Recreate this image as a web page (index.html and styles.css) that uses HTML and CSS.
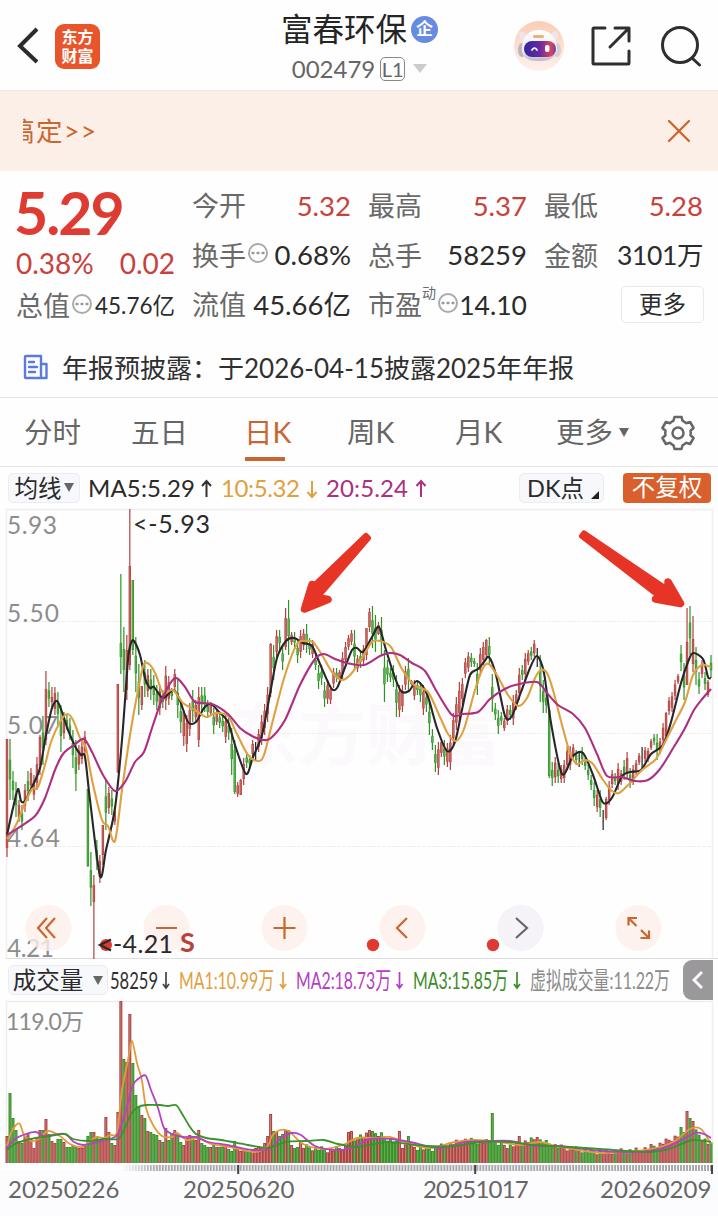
FILE: index.html
```html
<!DOCTYPE html>
<html lang="zh-CN">
<head>
<meta charset="utf-8">
<title>富春环保 002479</title>
<link rel="stylesheet" href="styles.css">
</head>
<body>
<header class="topbar">
  <div class="side side-left">
    <svg class="back" width="26" height="40" viewBox="0 0 26 40"><path d="M22 3 5 20l17 16" fill="none" stroke="#2b2b2b" stroke-width="4"/></svg>
    <div class="brand"><span>东方</span><span>财富</span></div>
  </div>
  <div class="title">
    <div class="name">富春环保<span class="badge">企</span></div>
    <div class="code"><span>002479</span><span class="level">L1</span><i class="caret"></i></div>
  </div>
  <div class="side side-right">
    <svg width="52" height="52" viewBox="0 0 52 52">
      <defs>
        <linearGradient id="halo" x1="0" y1="0" x2="0" y2="1"><stop offset="0" stop-color="#fbcdb4"/><stop offset="1" stop-color="#fdf1ee"/></linearGradient>
        <linearGradient id="visor"><stop offset="0" stop-color="#32269a"/><stop offset=".5" stop-color="#6a2aa2"/><stop offset=".85" stop-color="#d8455f"/><stop offset="1" stop-color="#6b3bb0"/></linearGradient>
        <linearGradient id="shell" x1="0" y1="0" x2="0" y2="1"><stop offset="0" stop-color="#fff"/><stop offset=".7" stop-color="#eeeaf0"/><stop offset="1" stop-color="#bdb6c4"/></linearGradient>
      </defs>
      <circle cx="26" cy="26" r="25" fill="url(#halo)"/>
      <path d="M6 12q5-1 9 5l-5 6q-4-6-4-11zM44 11q-5 0-8 5l7 6q3-6 1-11z" fill="#eee5ea"/>
      <ellipse cx="9" cy="30" rx="4" ry="7" fill="#bcb4c1"/><ellipse cx="44" cy="30" rx="4" ry="7" fill="#d9cdd6"/>
      <path d="M9 27Q11 10 26 10t18 17q1 14-18 14T9 27z" fill="url(#shell)"/>
      <rect x="20" y="15" width="11" height="3" rx="1.5" fill="#e9b378"/>
      <rect x="11" y="21" width="32" height="16" rx="8" fill="url(#visor)"/>
      <path d="M19 30q2.500-4 5 0" fill="none" stroke="#fff" stroke-width="1.700" stroke-linecap="round"/>
      <rect x="32" y="25" width="4.500" height="7" rx="2" fill="#fff"/>
    </svg>
    <svg class="share" width="42" height="42" viewBox="0 0 42 42" fill="none" stroke="#2f2f31" stroke-width="3" stroke-linecap="round" stroke-linejoin="round"><path d="M15 3H4Q3 3 3 4v34q0 1 1 1h34q1 0 1-1V26M25 3h14v13M39 3 20 22"/></svg>
    <svg width="42" height="42" viewBox="0 0 42 42" fill="none" stroke="#2f2f31" stroke-width="3" stroke-linecap="round"><circle cx="20" cy="20" r="17.500"/><path d="m32 33 7.500 7"/></svg>
  </div>
</header>

<section class="banner">
  <div class="marquee"><span>搞定&gt;&gt;</span></div>
  <svg width="24" height="24" viewBox="0 0 24 24"><path d="m2 2 20 20M22 2 2 22" stroke="#cb6630" stroke-width="2.300" stroke-linecap="round"/></svg>
</section>

<section class="quote">
  <div class="col">
    <div class="price">5.29</div>
    <div class="cell change"><b>0.38%</b><b>0.02</b></div>
    <div class="cell small"><span>总值<i class="dots"></i></span><em>45.76亿</em></div>
  </div>
  <div class="col">
    <div class="cell"><span>今开</span><em class="up">5.32</em></div>
    <div class="cell"><span>换手<i class="dots"></i></span><em>0.68%</em></div>
    <div class="cell"><span>流值</span><em>45.66亿</em></div>
  </div>
  <div class="col">
    <div class="cell"><span>最高</span><em class="up">5.37</em></div>
    <div class="cell"><span>总手</span><em>58259</em></div>
    <div class="cell pe"><span>市盈<sup>动</sup><i class="dots"></i></span><em>14.10</em></div>
  </div>
  <div class="col">
    <div class="cell"><span>最低</span><em class="up">5.28</em></div>
    <div class="cell amount"><span>金额</span><em>3101万</em></div>
    <div class="cell end"><button class="more">更多</button></div>
  </div>
</section>

<section class="notice">
  <svg width="26" height="26" viewBox="0 0 26 26" fill="none" stroke="#5b7bdc" stroke-width="2.400" stroke-linejoin="round"><path d="M3 2h15v22H3q-1 0-1-1V3q0-1 1-1zM18 10h5.500v14H18"/><path d="M6 8h5M6 13h8M6 18h6" stroke-linecap="round"/></svg>
  <span>年报预披露：于2026-04-15披露2025年年报</span>
</section>

<nav class="tabs">
  <span>分时</span><span>五日</span><span class="active">日K</span><span>周K</span><span>月K</span><span class="drop">更多<i></i></span>
  <svg width="36" height="36" viewBox="-18 -18 36 36" fill="none" stroke="#666" stroke-width="2.500" stroke-linejoin="round"><path d="M-3.500-16H3.500L4.500-12.300Q6.300-11.400 8-9.800L12.100-11 15.600-5 12.500-2.200Q13 0 12.500 2.200L15.600 5 12.100 11 8 9.800Q6.300 11.400 4.500 12.300L3.500 16H-3.500L-4.500 12.300Q-6.300 11.400-8 9.800L-12.100 11-15.600 5-12.500 2.200Q-13 0-12.500-2.200L-15.600-5-12.100-11-8-9.800Q-6.300-11.400-4.500-12.300Z"/><circle r="5.500"/></svg>
</nav>

<section class="ma">
  <div class="chip avg">均线<i></i></div>
  <svg class="matext" width="344" height="40" viewBox="85 467 344 40">
    <text x="88" y="496" textLength="107" fill="#2a2a2a">MA5:5.29</text>
    <text x="221" y="496" textLength="79" fill="#dfa03f">10:5.32</text>
    <text x="326" y="496" textLength="82" fill="#ac2f80">20:5.24</text>
    <g fill="none" stroke-width="2"><path d="M206.500 496v-16m-4.500 5 4.500-5 4.500 5" stroke="#333"/><path d="M312 480v16m-4.500-5 4.500 5 4.500-5" stroke="#dfa03f"/><path d="M421 496v-16m-4.500 5 4.500-5 4.500 5" stroke="#ac2f80"/></g>
  </svg>
  <div class="chip dk">DK点<i></i></div>
  <div class="fq">不复权</div>
</section>

<section class="stage">
  <svg id="kline" width="718" height="452" viewBox="0 508 718 452">
    <text class="watermark" x="230" y="760">东方财富</text>
    <g fill="none" stroke="#efefef"><path d="M6.500 958V509.500H712.500V958" stroke-width="1.500"/><path d="M7 621.500H712M7 733.500H712M7 846.500H712" stroke-dasharray="4 1"/><path d="M6 958.500H718" stroke="#ddd"/></g>
    <g class="axis"><text x="7" y="534" textLength="50">5.93</text><text x="7" y="622" textLength="52">5.50</text><text x="7" y="734" textLength="51">5.07</text><text x="7" y="847" textLength="53">4.64</text><text x="7" y="957" textLength="47">4.21</text></g>
    <g id="candles"></g>
    <g id="averages" fill="none" stroke-width="2.100" stroke-linejoin="round"></g>
    <g class="pad">
      <circle cx="48.500" cy="928" r="23"/><circle cx="166.500" cy="928" r="23"/><circle cx="284.500" cy="928" r="23"/><circle cx="402.500" cy="928" r="23"/><circle cx="520.500" cy="928" r="23" class="off"/><circle cx="638.500" cy="928" r="23"/>
      <path d="m47 918-9 10 9 10m8-20-9 10 9 10M156 928h21M273.500 928h22m-11-11v22M407 918l-10 10 10 10"/><path d="m516 918 11 10-11 10" style="stroke:#666"/>
      <path d="M628.500 925.500V918H637m-8 .5 7.500 7.500M649 930.500v7.500h-8.500m8-.5-7.500-7.500"/>
    </g>
    <g fill="#df3a31"><circle cx="106" cy="945" r="6"/><circle cx="373" cy="945" r="6.200"/><circle cx="493" cy="945" r="6.200"/></g>
    <g class="tag"><text x="133" y="533" textLength="77">&lt;-5.93</text><path d="m111 939.500-11 5.500 11 5.500" fill="none" stroke="#2a2a2a" stroke-width="2.200"/><text x="113" y="953" textLength="60">-4.21</text><text x="180" y="952" class="sell">S</text></g>
    <g fill="#e63426" stroke="#e63426" stroke-linejoin="round">
      <path d="M366 536 368 538 319 595 311 589Z" stroke-width="6"/><path d="M312 584.500 304.500 609 328 599.500 314 597Z" stroke-width="7.500"/>
      <path d="M582 536 584 533.500 669 591 663 599Z" stroke-width="6"/><path d="M668 582 680.500 603.500 655.500 599 668 594Z" stroke-width="7.500"/>
    </g>
  </svg>
</section>

<section class="volbar">
  <div class="chip vol">成交量<i></i></div>
  <svg width="565" height="40" viewBox="108 960 565 40">
    <g class="squeeze">
    <text x="110" y="989" textLength="48" lengthAdjust="spacingAndGlyphs" fill="#2f2f2f">58259</text>
    <text x="179" y="989" textLength="95" lengthAdjust="spacingAndGlyphs" fill="#dfa03f">MA1:10.99万</text>
    <text x="296" y="989" textLength="95" lengthAdjust="spacingAndGlyphs" fill="#b440c0">MA2:18.73万</text>
    <text x="413" y="989" textLength="95" lengthAdjust="spacingAndGlyphs" fill="#3b8c26">MA3:15.85万</text>
    <text x="530" y="989" textLength="140" lengthAdjust="spacingAndGlyphs" fill="#8b8b8b">虚拟成交量:11.22万</text>
    </g>
    <g fill="none" stroke-width="1.700"><path d="M166 972v16m-3-4 3 4 3-4" stroke="#444"/><path d="M283 972v16m-3-4 3 4 3-4" stroke="#dfa03f"/><path d="M399.500 972v16m-3-4 3 4 3-4" stroke="#b440c0"/><path d="M517 972v16m-3-4 3 4 3-4" stroke="#3b8c26"/></g>
  </svg>
  <div class="handle"><svg width="14" height="20" viewBox="0 0 14 20"><path d="m11 2-8 8 8 8" fill="none" stroke="#fff" stroke-width="2.800"/></svg></div>
</section>

<section class="volume">
  <svg width="718" height="176" viewBox="0 1000 718 176">
    <path d="M6.500 1163V1001.500H712.500V1163" fill="none" stroke="#eee" stroke-width="1.500"/>
    <g id="bars"></g>
    <g id="volAverages" fill="none" stroke-width="1.800" stroke-linejoin="round"></g>
    <g id="ticks"></g>
    <text x="6" y="1030" textLength="78" class="volmax">119.0万</text>
  </svg>
</section>
<footer class="dates"><span>20250226</span><span>20250620</span><span class="narrow">20251017</span><span>20260209</span></footer>
<script src="chart.js"></script>
</body>
</html>
```
FILE: styles.css
```css
* { box-sizing: border-box; }
body { margin: 0; width: 718px; height: 1216px; overflow: hidden; background: #fefefe; color: #2b2b2b; font-family: Lato, "Noto Sans CJK SC", sans-serif; }
svg { display: block; flex: none; }
i, em { font-style: normal; }
.topbar { height: 91px; border-bottom: 1px solid #e9e9e9; display: flex; justify-content: space-between; padding: 0 17px 0 15px; }
.side { display: flex; align-items: center; width: 190px; }
.side-left { gap: 14px; padding-top: 2px; }
.side-right { padding: 2px 0 0 2px; }
.side-right .share { margin: 0 28px 0 25px; }
.brand { width: 45px; height: 45px; border-radius: 9px; background: #e9552a; color: #fff; font: 700 16px/19px "Noto Sans CJK SC", sans-serif; text-align: center; display: flex; flex-direction: column; justify-content: center; }
.title { display: flex; flex-direction: column; align-items: center; padding: 8px 0 0 3px; }
.name { display: flex; align-items: center; gap: 4px; font-size: 31.500px; line-height: 42px; color: #242424; }
.badge { width: 27px; height: 27px; border-radius: 50%; background: #668ce1; color: #fff; font-size: 17px; line-height: 26px; text-align: center; font-weight: 700; }
.code { display: flex; align-items: center; gap: 5px; font-size: 24px; line-height: 37px; color: #666; }
.level { border: 1px solid #888; border-radius: 5px; font-size: 20px; line-height: 22px; width: 25px; text-align: center; }
.caret { border: 7px solid transparent; border-top: 9px solid #ccc; border-bottom: 0; margin-left: 3px; }
.banner { height: 80px; background: #fcefe8; display: flex; align-items: center; justify-content: space-between; padding: 0 27px 0 23px; }
.marquee { overflow: hidden; width: 120px; height: 44px; display: flex; color: #cb6630; font-size: 26.500px; line-height: 45px; white-space: nowrap; }
.marquee span { margin-left: -15px; letter-spacing: 1.500px; }
.quote { height: 167px; display: grid; grid-template-columns: repeat(4, 158px); gap: 18px; padding: 10px 0 0 17px; }
.cell { height: 49.500px; display: flex; align-items: center; justify-content: space-between; font-size: 27px; line-height: 40px; white-space: nowrap; }
.cell span { color: #696969; display: flex; align-items: center; margin-left: -1px; padding-top: 1px; }
.cell em { font-size: 27.500px; }
.cell .up, .change { color: #c8413a; }
.cell.change b { font-weight: 400; font-size: 28px; margin-left: -1px; }
.cell.change { height: 37px; }
.price { height: 63px; color: #de3c32; font-size: 59px; font-weight: 700; line-height: 64px; letter-spacing: -2px; margin-left: -3px; }
.cell.small em { font-size: 22.500px; }
.pe em { font-size: 26.500px; }
.amount em { font-size: 26.500px; letter-spacing: -.4px; }
.dots { width: 20px; height: 20px; margin: -5px 0 0 2px; border: 2px solid #aaa; border-radius: 50%; background: radial-gradient(circle, #999 1.300px, transparent 1.700px) 0 0 / 5px 16px; background-position: .5px 0; }
.cell sup { font-size: 14px; line-height: 16px; align-self: flex-start; }
.cell.end { justify-content: flex-end; }
.more { width: 83px; height: 37px; margin-right: -1px; border: 1px solid #e8e8e8; border-radius: 5px; background: #fff; color: #2b2b2b; font: 23.500px/30px "Noto Sans CJK SC", sans-serif; padding: 0 0 3px; }
.notice { height: 60px; border-bottom: 1px solid #e7e7e7; display: flex; align-items: center; gap: 13px; padding: 0 0 2px 23px; font-size: 26px; color: #303030; white-space: nowrap; }
.tabs { height: 69px; border-bottom: 1px solid #e5e5e5; display: grid; grid-template-columns: 107px 113px 103px 108px 101px 104px 36px; align-items: center; padding-left: 24px; font-size: 28.500px; line-height: 69px; color: #666; }
.tabs span { justify-self: start; }
.active { color: #c96530; background: linear-gradient(#c96530, #c96530) 1px 59px / 40px 4px no-repeat; }
.tabs .drop { display: flex; align-items: center; gap: 6px; }
.drop i, .avg i, .vol i { border: 5px solid transparent; border-top: 9px solid #666; border-bottom: 0; }
.ma, .volbar { height: 41px; display: flex; align-items: center; padding-left: 8px; }
.chip { height: 30px; border: 1px solid #ececf2; border-radius: 5px; background: #f7f8fc; display: flex; align-items: center; justify-content: center; font-size: 24px; line-height: 26px; white-space: nowrap; }
.avg { width: 72px; gap: 2px; font-size: 23.500px; }
.matext { margin-left: 5px; font-size: 24px; }
.dk { width: 85px; gap: 7px; margin-left: 90px; padding-left: 3px; font-size: 23.500px; }
.dk i { align-self: flex-end; margin-bottom: 3px; border-left: 8px solid transparent; border-bottom: 8px solid #222; }
.fq { width: 88px; height: 30px; margin-left: 19px; border-radius: 4px; background: #d9602c; color: #fff; font-size: 23.500px; line-height: 29px; text-align: center; }
.axis { fill: #8d8d8d; font-size: 24.500px; }
.watermark { font-size: 68px; font-weight: 700; fill: #fcf9fc; }
.pad circle { fill: #fdefea; fill-opacity: .8; }
.pad .off { fill: #f2eff6; }
.pad path { fill: none; stroke: #cb6630; stroke-width: 2.200; }
.tag { font-size: 25px; fill: #2a2a2a; }
.tag .sell { font-size: 27px; font-weight: 700; fill: #b8413a; }
.stage { height: 452px; }
.volbar { height: 40px; }
.vol { width: 100px; gap: 10px; font-size: 23.500px; }
.squeeze { font-size: 24px; }
.handle { width: 30px; height: 40px; margin-left: auto; margin-right: 5px; background: #9b989c; border-radius: 9px 0 0 9px; display: flex; align-items: center; justify-content: center; }
.volmax { fill: #8b8b8b; font-size: 23px; }
.volume { height: 170px; }
.dates { display: grid; grid-template-columns: 175px 240px 177px 112px; padding: 4px 0 0 8px; font-size: 24px; line-height: 30px; color: #666; background: #fcfbfe; height: 46px; }
.narrow { letter-spacing: -.8px; }
```
FILE: chart.js
```js
// One candle per 3px: colour, high, low and, when known, body top and bottom.
const candleData = `r739,857,739,848 g739,800 g771,800 g782,817 r800,822 g805,830 r784,812 g771,801 r768,790 r775,800 r757,790 r735,775,737,765
g716,765 r671,745,689,740 g682,707 r687,708,697,702 r687,715 g692,725 g705,752 r712,739 g715,730 g718,740 g730,768 g740,791
r745,770 r742,764 r731,757 g789,867,789,866 g852,906 r875,959,885,902 g840,870 r855,883 r825,865,825,855 g779,830 r787,814 g790,815 r808,825 r684,773,684,772
g574,674,643,657 g627,692 r635,700,650,690 r509,670,566,665 g580,655,580,650 g637,692 g664,715 r686,710,686,705 g660,697 r669,697 g669,700 g675,705 g685,710
r685,715 g690,708 r666,710 r676,705 g688,700 r669,692 g680,718 g700,733 r710,746,712,736 r715,752 r703,736 g690,722 r700,722 r687,747,697,740 g687,712 g687,712
g700,718 r702,716 g708,734 r710,725 g712,728 g715,732 r715,743 g718,740 g728,775 g740,794,750,792 r782,797 r779,795,780,795 r758,785 g752,768 g755,768 r740,758
k742,760 r729,752 r715,745 r704,735 r687,722 r643,697,644,693 g645,680 r630,658 g630,650 g645,670 r608,650,618,647 g600,655 r632,645 g632,648 g640,663
r630,658 r629,650 g624,653 g638,655 r640,658 g655,670 g665,689 g665,685 g682,707 r680,704 r685,704 r668,688 g668,682 r670,680 r652,680 r642,665 r635,650 r630,645
g630,670 r655,672 g650,668 r645,665 r628,660,628,655 r608,632,612,627 g606,648 g615,652 r622,635,625,634 g617,655 g650,702 g660,682 g668,682 g665,687 g675,717
r685,717 r685,712 r666,690 g658,690 r680,685 r680,700 g680,695 g682,702 r685,715 g690,712 g700,735 g729,750 g745,772 r742,775 r738,757 g740,765 r743,767 r735,770
r713,745 r697,730 r682,722 r678,705 r658,678 r652,672 g653,667 g658,667 g663,695 r648,676 r642,665 r639,660,640,655 g637,664 g674,712 g703,720 g710,734 g712,725
r718,731 r705,725 g705,720 r695,725 r690,710 r668,700 g665,680 r653,680 r650,665 g647,660 r640,657 k648,667 g655,702 g680,713 g690,713 g710,778,710,776 g762,786
r757,783 g763,783 r765,783 r760,783 r746,770 r746,770 r744,760 g750,765 k752,767 g747,765 g758,770 g765,780 g775,790 g782,806 r790,812 g790,817 k810,830
r797,820,799,818 r781,805 r770,788 g773,785 r763,790 r770,785 g760,780 r752,780 g768,788 r765,785 r760,775 r753,765 k747,770 r747,762 r748,762 r739,750 g734,745
g734,760 r738,754 r723,745 r712,740,713,736 r697,715 r692,712 r680,700 r674,684 g645,671 g663,700 r608,685,642,685 g606,655 r616,672,639,664 g647,685 g672,694
r660,678 g672,690 r680,697,682,695 g655,678`.split(/\s+/);

const lines = {
  '#27272a': [7,835,13,808,18,789,21,801,25,801,32,787,40,768,46,735,52,708,57,701,62,712,68,730,76,748,81,755,85,757,90,800,100,876,106,850,115,808,122,740,128,660,131,643,134,641,140,655,145,678,150,688,154,687,163,698,173,690,179,698,188,722,196,722,204,708,211,704,219,712,228,722,235,745,246,774,253,757,262,735,270,694,277,658,286,641,294,638,303,643,312,646,320,664,331,688,337,688,344,670,352,650,357,648,363,652,372,637,379,627,386,650,394,675,401,691,409,691,417,681,427,694,437,728,447,751,455,742,463,705,470,675,478,669,484,662,489,657,496,675,505,716,512,716,521,692,530,668,537,656,544,673,551,723,562,774,573,756,583,753,593,775,602,801,607,803,613,796,622,776,630,772,641,770,651,754,663,745,671,722,681,683,688,662,693,653,703,659,708,677,711,678],
  '#dfa03f': [7,839,16,825,25,803,32,789,38,787,45,765,51,742,60,722,67,714,73,720,80,738,86,748,92,780,102,820,108,826,115,841,122,790,130,735,139,685,144,664,150,665,156,675,163,693,173,690,183,703,195,710,206,717,216,713,228,716,236,732,248,755,258,761,264,755,273,720,285,675,297,644,305,641,313,642,322,655,332,672,342,680,351,674,362,658,372,642,380,641,391,647,402,669,414,685,428,692,440,717,448,734,456,741,464,729,475,690,483,668,489,664,498,677,508,695,518,706,527,698,535,678,541,670,547,673,553,690,562,725,570,753,577,764,585,760,593,764,603,780,612,791,619,793,630,783,642,770,656,759,665,742,675,722,685,702,693,675,702,665,711,667],
  '#ac2f80': [7,835,15,830,35,816,45,798,55,770,63,754,74,745,84,739,92,752,103,775,115,791,125,782,135,762,144,752,153,725,163,697,175,678,185,687,195,702,212,704,228,714,240,728,252,736,263,740,271,738,285,720,300,685,315,659,324,654,335,659,347,663,364,665,380,656,390,653,400,655,412,663,425,671,437,692,452,715,463,714,478,712,490,699,503,690,515,685,537,682,547,693,558,705,573,714,585,728,597,754,607,776,622,777,635,781,648,780,660,769,672,750,684,730,694,710,703,698,711,689]
};
const edge = { r: '#b2423e', g: '#2f9427', k: '#222' };
const core = { r: '#ce6e68', g: '#63b958', k: '#222' };
const rect = (x, y, w, h, f) => `<rect x="${x}" y="${y}" width="${w}" height="${h}" fill="${f}"/>`;

// Smooth curve through the points (Catmull-Rom converted to Bezier).
function curve(p) {
  const n = p.length / 2, at = i => { i = Math.max(0, Math.min(n - 1, i)); return [p[i * 2], p[i * 2 + 1]]; };
  let d = `M${at(0)}`;
  for (let i = 0; i < n - 1; i++) {
    const [a, b, c, e] = [at(i - 1), at(i), at(i + 1), at(i + 2)];
    d += `C${b[0] + (c[0] - a[0]) / 7},${b[1] + (c[1] - a[1]) / 7} ${c[0] - (e[0] - b[0]) / 7},${c[1] - (e[1] - b[1]) / 7} ${c}`;
  }
  return d;
}
const drawLines = (id, set) => {
  document.getElementById(id).innerHTML = Object.entries(set).map(([c, p]) => `<path d="${curve(p)}" stroke="${c}"/>`).join('');
};

const step = 704 / (candleData.length - 1);
const count = candleData.length;
document.getElementById('candles').innerHTML = candleData.map((s, i) => {
  const c = s[0], [hi, lo, t, b] = s.slice(1).split(',').map(Number), x = 7 + i * step;
  const inset = c === 'g' ? .34 : .22;
  const top = t || hi + (lo - hi) * inset, bot = b || lo - (lo - hi) * inset;
  if (c === 'k') return rect(x - .6, hi, 1.2, lo - hi, edge.k);
  return rect(x - .6, hi, 1.2, lo - hi, edge[c]) + rect(x - 1.2, top, 2.4, bot - top, edge[c]) + rect(x - .4, top + .5, .8, Math.max(0, bot - top - 1), core[c]);
}).join('');
drawLines('averages', lines);

// Volume bar tops; later bars hover round a slowly changing level.
const tops = [1136,1093,1118,1130,1141,1143,1136,1133,1138,1148,1138,1130,1130,1119,1134,1141,1143,1139,1139,1142,1147,1147,1145,1147,1148,1148,1146,1136,1132,1132,1137,1140,1138,1117,1132,1143,1145,1112,1001,1059,1062,1014,1063,1095,1106,1115,1118,1131,1132,1134,1135,1140,1142,1128,1140,1133,1130,1133,1142,1145,1138,1135,1136,1140,1130,1143,1145,1147,1147,1145,1147,1147,1147,1146,1149,1151,1141,1149,1151,1150,1150,1152,1149,1148,1146,1148,1143,1136,1114,1131,1132,1136,1134,1130,1130,1145,1148,1147,1142];
const level = [307,1147,330,1150,350,1146,358,1136,380,1134,400,1145,430,1149,450,1144,465,1140,490,1142,510,1146,535,1139,560,1147,600,1152,640,1150,660,1144,675,1137,684,1132,696,1132,712,1146];
const peakList = [[349,1132],[352,1131],[370,1130],[373,1131],[378,1136],[399,1131],[408,1136],[492,1113],[520,1136],[537,1137],[681,1127],[687,1111],[690,1118],[693,1121]];
const rising = new Set([6, 7, 8, 9, 33, 37, 88]);
const falling = new Set([14, 64 - 10, 89]);
function topAt(x, i) {
  if (tops[i]) return tops[i];
  const hit = peakList.find(([p]) => Math.abs(p - x) < 1.5);
  if (hit) return hit[1];
  let k = 0;
  while (k < level.length - 4 && level[k + 2] < x) k += 2;
  const f = (x - level[k]) / (level[k + 2] - level[k]);
  return level[k + 1] + f * (level[k + 3] - level[k + 1]) + ((i * 7) % 5 - 2) * 1.3;
}
let bars = '';
for (let i = 0; i < count; i++) {
  const x = 7 + i * step, t = topAt(x, i);
  let c = candleData[i][0] === 'g' ? 'g' : 'r';
  if (rising.has(i) || i === 38) c = 'r';
  if (falling.has(i)) c = 'g';
  bars += rect(x - 1.5, t, 3, 1163 - t, c === 'r' ? '#a94440' : '#3e8e2d') + rect(x - .4, t + 1, .8, 1162 - t, c === 'r' ? '#d98580' : '#65ba55');
}
document.getElementById('bars').innerHTML = bars;
drawLines('volAverages', {
  '#e39a3b': [7,1146,11,1133,16,1125,20,1124,24,1135,31,1141,39,1139,48,1131,60,1136,70,1144,82,1147,90,1141,97,1137,104,1138,110,1135,117,1132,122,1090,128,1060,132,1041,137,1063,142,1081,146,1108,153,1125,162,1136,172,1137,177,1133,187,1140,199,1138,211,1144,230,1147,253,1152,267,1147,272,1136,280,1130,289,1131,296,1138,305,1145,325,1149,345,1144,357,1138,377,1138,390,1137,410,1144,430,1148,455,1142,475,1140,500,1142,520,1145,540,1142,560,1147,600,1153,635,1151,660,1147,675,1141,690,1129,701,1129,711,1144],
  '#b542c1': [7,1148,15,1139,26,1134,36,1132,43,1136,53,1135,65,1134,74,1142,83,1145,94,1143,110,1139,118,1134,126,1110,133,1085,141,1077,146,1076,151,1090,158,1108,164,1128,172,1134,183,1137,196,1137,208,1142,227,1145,252,1150,269,1149,281,1138,292,1133,301,1135,315,1146,335,1150,352,1148,370,1139,391,1139,410,1142,440,1148,465,1142,490,1141,510,1141,535,1146,560,1146,600,1151,635,1152,660,1149,680,1141,695,1133,704,1134,711,1138],
  '#39932b': [7,1150,15,1144,30,1139,50,1136,65,1134,73,1139,89,1141,104,1139,118,1139,124,1130,131,1114,138,1107,146,1105,160,1105,168,1106,176,1105,181,1112,190,1127,196,1134,206,1138,221,1140,248,1145,268,1148,286,1142,306,1141,324,1140,338,1144,358,1147,374,1144,390,1142,425,1146,455,1146,480,1142,510,1142,535,1145,570,1147,600,1149,650,1152,672,1148,692,1140,711,1142]
});
let ticks = '';
for (let i = 39; i < count; i++) ticks += `<rect x="${6 + i * step}" y="1165" width="2" height="6" fill="#aaa" opacity="${Math.min(1, (i - 38) / 12)}"/>`;
for (const x of [237.200, 474.200, 711]) ticks += rect(x, 1165, 2, 9, '#444');
document.getElementById('ticks').innerHTML = ticks;
```
